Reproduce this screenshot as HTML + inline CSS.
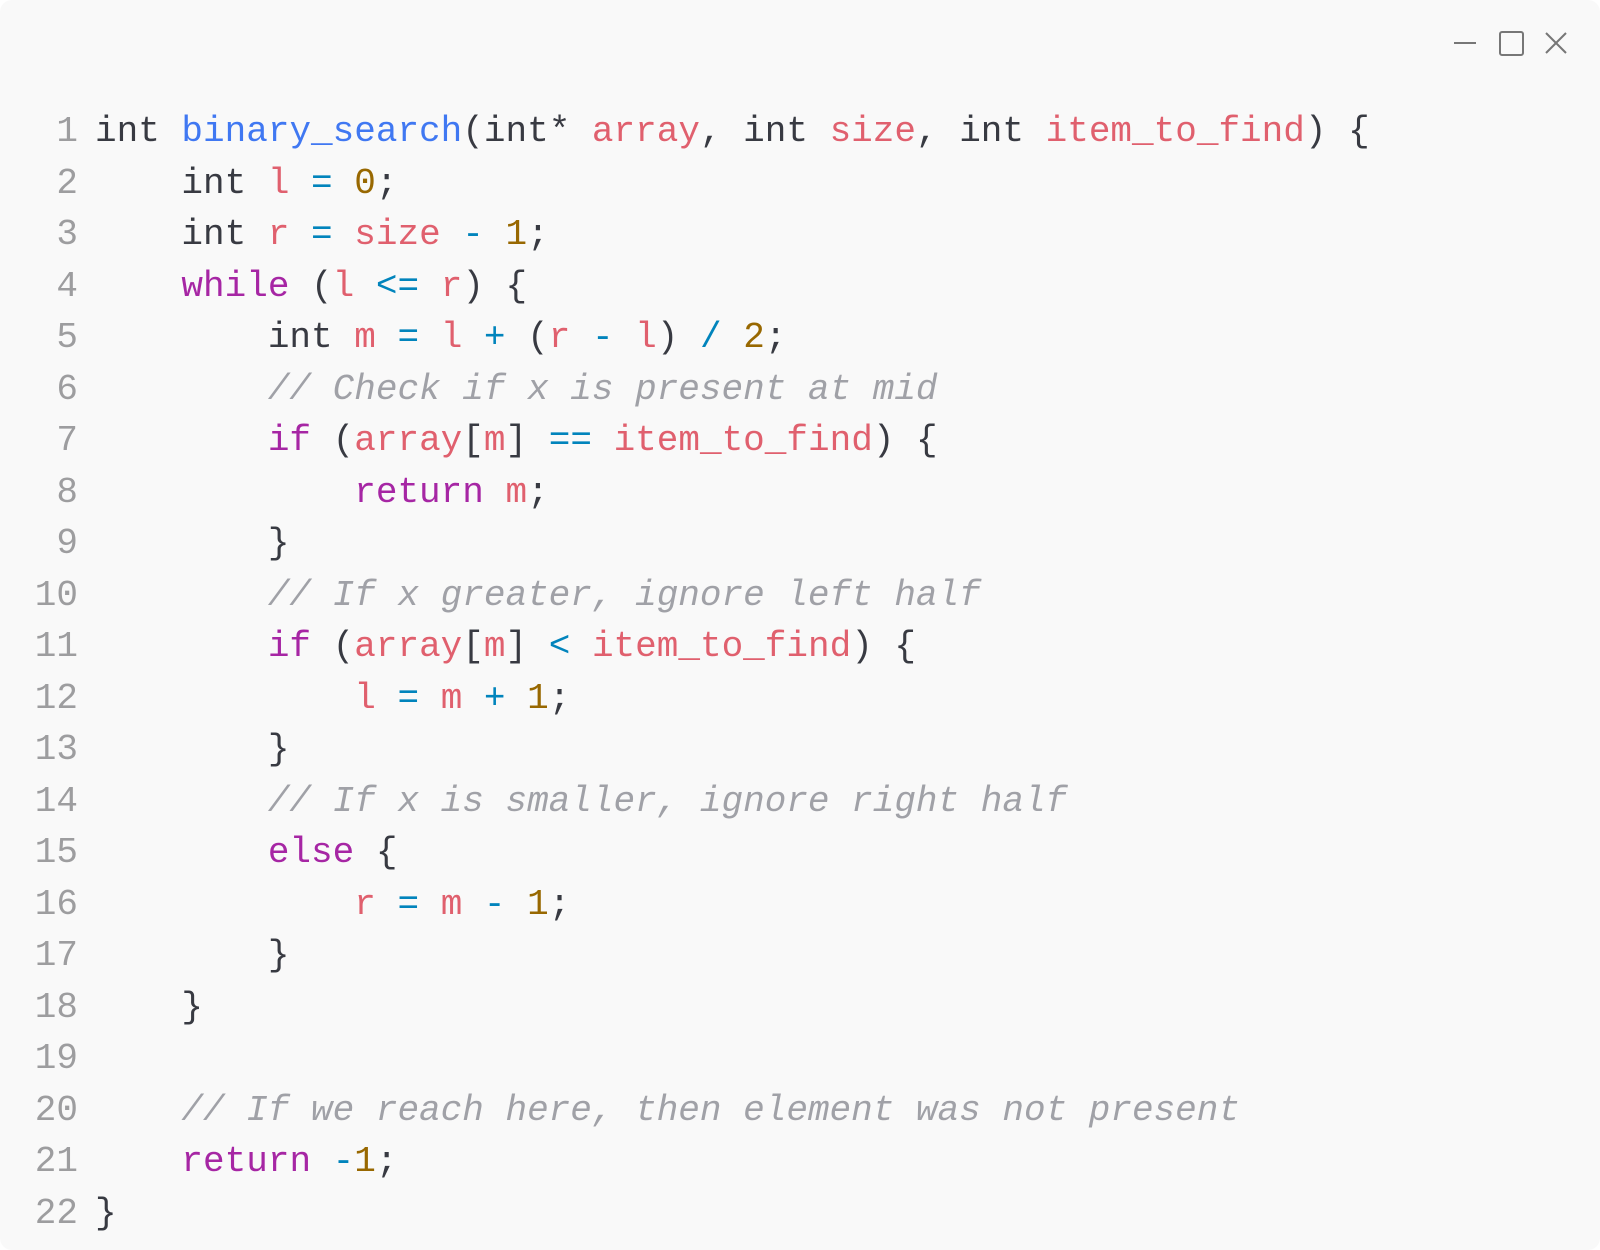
<!DOCTYPE html>
<html><head><style>
html,body{margin:0;padding:0;width:1600px;height:1250px;background:#fff;overflow:hidden}
.win{position:absolute;left:0;top:0;width:1600px;height:1250px;background:#f9f9f9;border-radius:12px}
.code{position:absolute;left:0;top:106px;font-family:"Liberation Mono",monospace;font-size:36px;line-height:51.5px;color:#383a42;white-space:pre}
.ln{display:inline-block;width:78px;text-align:right;color:#9d9d9f;margin-right:17px}
.k{color:#a626a4}.f{color:#4078f2}.v{color:#e0606e}.n{color:#986801}.o{color:#0184bc}.c{color:#a0a1a7;font-style:italic}
</style></head><body><div class="win">
<svg style="position:absolute;left:1450px;top:26px" width="130" height="35">
<line x1="4" y1="17" x2="26" y2="17" stroke="#777" stroke-width="2"/>
<rect x="50" y="6" width="23" height="23" rx="2" fill="none" stroke="#777" stroke-width="2"/>
<line x1="96" y1="7" x2="116" y2="27" stroke="#777" stroke-width="2"/>
<line x1="116" y1="7" x2="96" y2="27" stroke="#777" stroke-width="2"/>
</svg>
<div class="code"><span class="ln">1</span>int <span class="f">binary_search</span>(int* <span class="v">array</span>, int <span class="v">size</span>, int <span class="v">item_to_find</span>) {
<span class="ln">2</span>    int <span class="v">l</span> <span class="o">=</span> <span class="n">0</span>;
<span class="ln">3</span>    int <span class="v">r</span> <span class="o">=</span> <span class="v">size</span> <span class="o">-</span> <span class="n">1</span>;
<span class="ln">4</span>    <span class="k">while</span> (<span class="v">l</span> <span class="o">&lt;=</span> <span class="v">r</span>) {
<span class="ln">5</span>        int <span class="v">m</span> <span class="o">=</span> <span class="v">l</span> <span class="o">+</span> (<span class="v">r</span> <span class="o">-</span> <span class="v">l</span>) <span class="o">/</span> <span class="n">2</span>;
<span class="ln">6</span>        <span class="c">// Check if x is present at mid</span>
<span class="ln">7</span>        <span class="k">if</span> (<span class="v">array</span>[<span class="v">m</span>] <span class="o">==</span> <span class="v">item_to_find</span>) {
<span class="ln">8</span>            <span class="k">return</span> <span class="v">m</span>;
<span class="ln">9</span>        }
<span class="ln">10</span>        <span class="c">// If x greater, ignore left half</span>
<span class="ln">11</span>        <span class="k">if</span> (<span class="v">array</span>[<span class="v">m</span>] <span class="o">&lt;</span> <span class="v">item_to_find</span>) {
<span class="ln">12</span>            <span class="v">l</span> <span class="o">=</span> <span class="v">m</span> <span class="o">+</span> <span class="n">1</span>;
<span class="ln">13</span>        }
<span class="ln">14</span>        <span class="c">// If x is smaller, ignore right half</span>
<span class="ln">15</span>        <span class="k">else</span> {
<span class="ln">16</span>            <span class="v">r</span> <span class="o">=</span> <span class="v">m</span> <span class="o">-</span> <span class="n">1</span>;
<span class="ln">17</span>        }
<span class="ln">18</span>    }
<span class="ln">19</span>
<span class="ln">20</span>    <span class="c">// If we reach here, then element was not present</span>
<span class="ln">21</span>    <span class="k">return</span> <span class="o">-</span><span class="n">1</span>;
<span class="ln">22</span>}</div>
</div></body></html>
